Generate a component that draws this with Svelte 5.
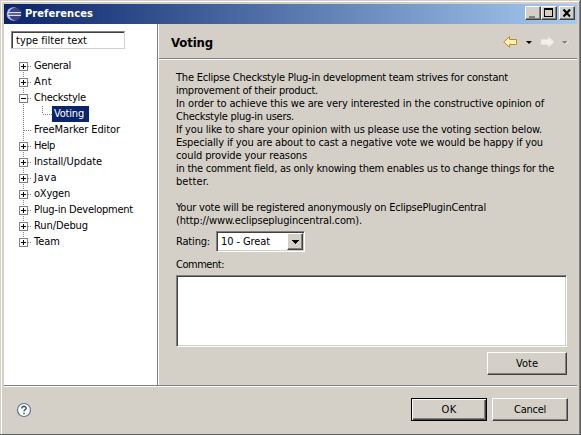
<script>
  const nodes = [
    { label: 'General', w: 37, sign: '+' },
    { label: 'Ant', w: 18, sign: '+' },
    { label: 'Checkstyle', w: 52, sign: '-' },
    { label: 'Voting', w: 30, child: true },
    { label: 'FreeMarker Editor', w: 86 },
    { label: 'Help', w: 21, sign: '+' },
    { label: 'Install/Update', w: 68, sign: '+' },
    { label: 'Java', w: 23, sign: '+' },
    { label: 'oXygen', w: 36, sign: '+' },
    { label: 'Plug-in Development', w: 99, sign: '+' },
    { label: 'Run/Debug', w: 54, sign: '+' },
    { label: 'Team', w: 26, sign: '+' }
  ];
  const lines = [
    ['The Eclipse Checkstyle Plug-in development team strives for constant', 332],
    ['improvement of their product.', 142],
    ['In order to achieve this we are very interested in the constructive opinion of', 368],
    ['Checkstyle plug-in users.', 118],
    ['If you like to share your opinion with us please use the voting section below.', 366],
    ['Especially if you are about to cast a negative vote we would be happy if you', 367],
    ['could provide your reasons', 131],
    ['in the comment field, as only knowing them enables us to change things for the', 378],
    ['better.', 33],
    ['', 0],
    ['Your vote will be registered anonymously on EclipsePluginCentral', 310],
    ['(http://www.eclipseplugincentral.com).', 186]
  ];

  // Tightens or loosens the tracking so a label takes up the given width.
  function fit(node, width) {
    const n = node.textContent.length;
    if (!n) return;
    const natural = node.getBoundingClientRect().width;
    node.style.letterSpacing = (width - natural) / n + 'px';
  }
</script>

<div class="window">
  <div class="title">
    <svg class="logo" width="16" height="16" viewBox="0 0 16 16">
      <circle cx="7.5" cy="8" r="6.800" fill="#b9badb" />
      <circle cx="9.300" cy="8" r="6.200" fill="#3d4284" />
      <path d="M2 6.500H15M2 9.500H15" stroke="#d9daf0" stroke-width="1" />
      <path d="M2 8H15" stroke="#7c80b4" stroke-width="1" />
    </svg>
    <span class="name"><span use:fit={68}>Preferences</span></span>
    <div class="caps">
      <i class="cap"><svg width="14" height="12" shape-rendering="crispEdges"><path d="M3 9h6v2h-6z" fill="#808080" /></svg></i>
      <i class="cap"><svg width="14" height="12" shape-rendering="crispEdges"><path d="M2 1h9v9h-9zM3 3v6h7v-6z" fill="#000" fill-rule="evenodd" /></svg></i>
      <i class="cap close"><svg width="14" height="12"><path d="M3.500 2.500l6.500 7M10 2.500l-6.500 7" stroke="#000" stroke-width="2" /></svg></i>
    </div>
  </div>

  <div class="main">
    <aside>
      <div class="filter"><span use:fit={71}>type filter text</span></div>
      <div class="tree">
        {#each nodes as n, i}
          <div class="node" class:child={n.child}>
            <svg class="lines" width="34" height="16" shape-rendering="crispEdges">
              {#if n.child}
                <path d="M4.500 0v16M23.500 0v8M23.500 8.500h10" stroke="#808080" stroke-dasharray="1 1" />
              {:else}
                <path d="M4.500 {i === 0 ? 8 : 0}V{i === nodes.length - 1 ? 8 : 16}M5 8.500h8" stroke="#808080" stroke-dasharray="1 1" />
              {/if}
              {#if n.sign}
                <rect x="0.5" y="4.5" width="8" height="8" fill="#fff" stroke="#808080" />
                <path d={n.sign === '+' ? 'M2 8.5h5M4.5 6v5' : 'M2 8.5h5'} stroke="#000" />
              {/if}
            </svg>
            <span class="label"><span use:fit={n.w}>{n.label}</span></span>
          </div>
        {/each}
      </div>
    </aside>

    <section>
      <header>
        <h1><span use:fit={42}>Voting</span></h1>
        <svg width="70" height="16" viewBox="0 0 70 16">
          <path d="M0.700 8L6.500 2.700V5.500H13.500V10.500H6.500V13.300Z" fill="#fdf0b4" stroke="#c08a2c" />
          <path d="M23 7h6l-3 3z" fill="#000" />
          <path d="M51 8L45.200 2.700V5.500H38V10.500H45.200V13.300Z" fill="#f3f1ed" stroke="#e6e3dd" />
          <path d="M59 7h6l-3 3z" fill="#808080" /><path d="M62 10.500l3.500-3.500" stroke="#fff" />
        </svg>
      </header>
      <div class="body">
        {#each lines as [text, w]}
          <div class="line"><span use:fit={w}>{text}</span></div>
        {/each}
        <div class="rating">
          <span class="rlabel"><span use:fit={34}>Rating:</span></span>
          <div class="combo">
            <span class="value"><span use:fit={49}>10 - Great</span></span>
            <i class="drop"><svg width="7" height="4" shape-rendering="crispEdges"><path d="M0 0h7v1h-1v1h-1v1h-1v1h-1v-1h-1v-1h-1v-1h-1z" /></svg></i>
          </div>
        </div>
        <div class="clabel"><span use:fit={48}>Comment:</span></div>
        <div class="area"></div>
        <button class="vote"><span use:fit={22}>Vote</span></button>
      </div>
    </section>
  </div>

  <footer>
    <svg width="16" height="16" viewBox="0 0 16 16">
      <circle cx="8" cy="8" r="6.500" fill="#fff" stroke="#63738f" stroke-width="1.200" />
      <path d="M5.800 6.400C5.800 3.700 10.200 3.700 10.200 6.200C10.200 7.700 8 7.700 8 9.500M8 10.800V12.300" fill="none" stroke="#47598a" stroke-width="1.600" />
    </svg>
    <div class="actions">
      <button class="default"><span use:fit={15}>OK</span></button>
      <button><span use:fit={32}>Cancel</span></button>
    </div>
  </footer>
</div>

<style>
  :global(body) { margin: 0; overflow: hidden; background: #d4d0c8; }
  .window {
    box-sizing: border-box; width: 581px; height: 435px;
    display: flex; flex-direction: column;
    background: #d4d0c8; color: #000;
    font: 11px/13px "DejaVu Sans Condensed", "DejaVu Sans", sans-serif; font-stretch: condensed;
    padding: 4px 4px 1px 4px;
    box-shadow: inset -1px -1px #606060, inset 1px 1px #d4d0c8, inset -2px -1px #808080, inset 2px 2px #fff;
  }
  span { white-space: pre; }
  .title {
    height: 20px; flex: none; display: flex; align-items: center;
    background: linear-gradient(90deg, #0a246a, #a6caf0);
    color: #fff; font-weight: bold;
  }
  .logo { margin: 0 0 1px 2px; }
  .name { margin: 0 0 1px 3px; flex: 1; }
  .caps { display: flex; margin: 0 2px 2px 0; }
  .cap, .drop {
    display: block; box-sizing: border-box; background: #d4d0c8;
    border: 1px solid; border-color: #fff #404040 #404040 #fff;
    box-shadow: inset -1px -1px #808080;
  }
  .cap { width: 16px; height: 14px; }
  .cap svg { display: block; }
  .close { margin-left: 2px; }
  .main { height: 361px; flex: none; display: flex; }
  aside {
    box-sizing: border-box; width: 155px; padding: 7px 0 0 7px;
    background: #fff; border-right: 1px solid #fff; box-shadow: inset -1px 0 #808080;
  }
  .filter {
    box-sizing: border-box; width: 114px; height: 18px; padding: 2px 0 0 4px;
    border: 1px solid; border-color: #808080 #d4d0c8 #d4d0c8 #808080; box-shadow: inset 1px 1px #404040;
  }
  .tree { margin: 9px 0 0 8px; }
  .node { height: 16px; display: flex; align-items: center; }
  .lines { flex: none; width: 13px; }
  .label { padding: 1px 2px 2px; }
  .child .lines { width: 33px; }
  .child .label { background: #0a246a; color: #fff; padding-right: 5px; }
  section { flex: 1; display: flex; flex-direction: column; }
  header {
    box-sizing: border-box; height: 36px; flex: none; padding: 0 4px 0 12px;
    display: flex; justify-content: space-between; align-items: center;
    border-bottom: 1px solid #fff; box-shadow: inset 0 -1px #808080;
  }
  h1 { margin: 2px 0 0; font-size: 13px; line-height: 16px; }
  .body { padding: 11px 10px 0 17px; display: flex; flex-direction: column; }
  .line { height: 13px; }
  .rating { display: flex; align-items: center; margin-top: 4px; height: 21px; }
  .rlabel { width: 40px; }
  .combo {
    box-sizing: border-box; width: 89px; height: 21px; padding: 1px;
    display: flex; align-items: center; justify-content: space-between; background: #fff;
    border: 1px solid; border-color: #808080 #fff #fff #808080; box-shadow: inset 1px 1px #404040, inset -1px -1px #d4d0c8;
  }
  .value { padding-left: 3px; }
  .drop { width: 16px; height: 17px; display: flex; align-items: center; justify-content: center; }
  .clabel { margin-top: 6px; height: 13px; }
  .area {
    box-sizing: border-box; height: 72px; margin-top: 4px; background: #fff;
    border: 1px solid; border-color: #808080 #fff #fff #808080; box-shadow: inset 1px 1px #404040, inset -1px -1px #d4d0c8;
  }
  button {
    box-sizing: border-box; width: 76px; height: 23px; padding: 0 0 1px; color: #000; font: inherit;
    background: #d4d0c8; border: 1px solid; border-color: #fff #404040 #404040 #fff; box-shadow: inset -1px -1px #808080;
  }
  .vote { width: 80px; align-self: flex-end; margin-top: 5px; }
  .default { border-color: #000; box-shadow: inset 1px 1px #fff, inset -1px -1px #404040, inset -2px -2px #808080; }
  footer {
    box-sizing: border-box; flex: 1; display: flex; align-items: center; justify-content: space-between;
    border-top: 1px solid #808080; box-shadow: inset 0 1px #fff; padding: 0 9px 1px 12px;
  }
  .actions { display: flex; gap: 5px; }
</style>
